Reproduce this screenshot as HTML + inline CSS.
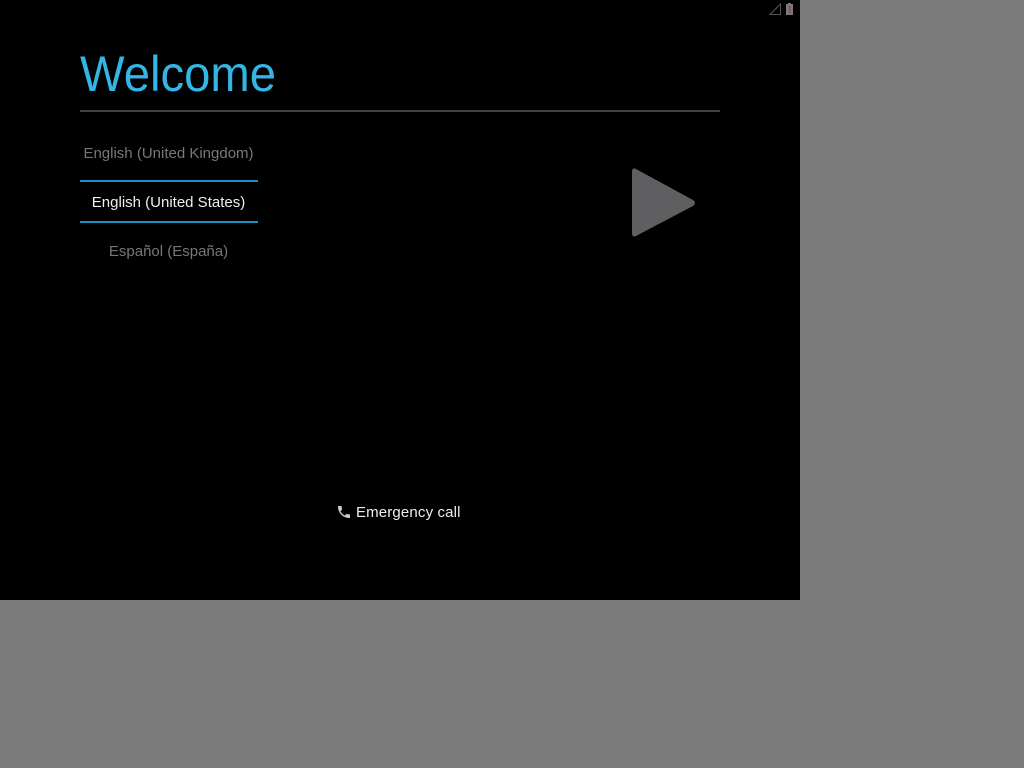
<!DOCTYPE html>
<html><head><meta charset="utf-8"><style>
html,body{margin:0;padding:0;width:1024px;height:768px;background:#7b7b7b;overflow:hidden;font-family:"Liberation Sans",sans-serif}
#scr{position:absolute;left:0;top:0;width:800px;height:600px;background:#000}
.t{position:absolute;white-space:nowrap}
</style></head><body>
<div id="scr">
<svg style="position:absolute;left:768px;top:2px" width="30" height="14">
<path d="M2 12.5 L12.5 2 L12.5 12.5 Z" fill="none" stroke="#555" stroke-width="1"/>
<rect x="18" y="2" width="7" height="11" fill="#7a7a7a"/>
<rect x="20" y="1" width="3" height="2" fill="#7a7a7a"/>
<rect x="21" y="4" width="1.5" height="7" fill="#b33"/>
</svg>
<div class="t" style="left:80px;top:45px;font-size:50px;color:#33b5e5;transform:scaleX(0.945);transform-origin:0 0;-webkit-text-stroke:0">Welcome</div>
<div style="position:absolute;left:80px;top:110px;width:640px;height:2px;background:#444"></div>
<div class="t" style="left:80px;top:145px;width:177px;text-align:center;font-size:15px;color:#777">English (United Kingdom)</div>
<div style="position:absolute;left:80px;top:180px;width:178px;height:2px;background:#1d8fc2"></div>
<div class="t" style="left:80px;top:194px;width:177px;text-align:center;font-size:15px;color:#eee">English (United States)</div>
<div style="position:absolute;left:80px;top:221px;width:178px;height:2px;background:#1d8fc2"></div>
<div class="t" style="left:80px;top:243px;width:177px;text-align:center;font-size:15px;color:#777">Español (España)</div>
<svg style="position:absolute;left:628px;top:164px" width="75" height="78">
<path d="M8 5 Q4 3 4 8 L4 69 Q4 74 8 72 L65 42 Q69 39 65 36 Z" fill="#5f5e60"/>
</svg>
<svg style="position:absolute;left:336px;top:504px" width="16" height="16" viewBox="0 0 24 24">
<path d="M6.6 10.8c1.4 2.8 3.8 5.1 6.6 6.6l2.2-2.2c.3-.3.7-.4 1-.2 1.1.4 2.300.6 3.6.6.6 0 1 .4 1 1V20c0 .6-.4 1-1 1C10.6 21 3 13.4 3 4c0-.6.4-1 1-1h3.5c.6 0 1 .4 1 1 0 1.3.2 2.5.6 3.6.1.3 0 .7-.2 1L6.6 10.8z" fill="#ccc"/>
</svg>
<div class="t" style="left:356px;top:504px;font-size:15px;color:#eee;letter-spacing:0.15px">Emergency call</div>
</div>
</body></html>
